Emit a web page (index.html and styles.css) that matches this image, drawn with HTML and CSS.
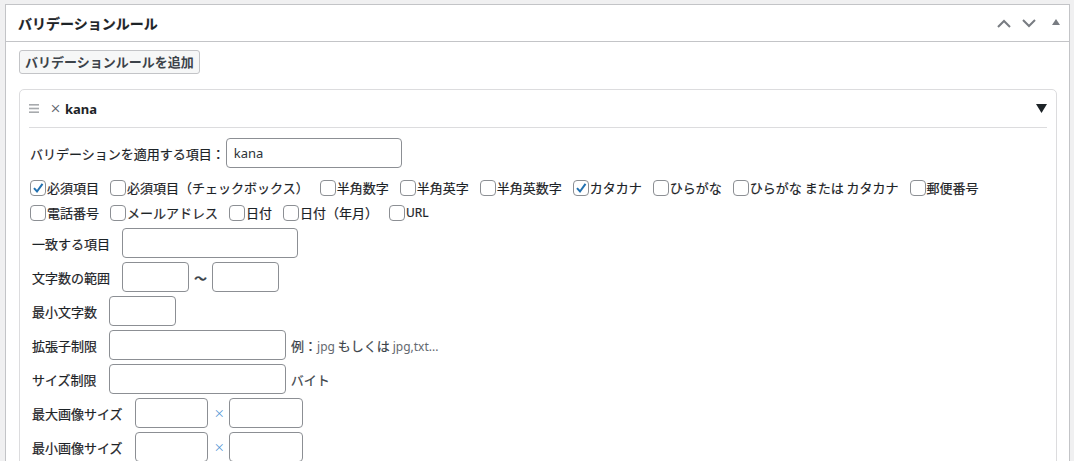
FILE: index.html
```html
<!DOCTYPE html>
<html lang="ja">
<head>
<meta charset="utf-8">
<title>バリデーションルール</title>
<link rel="stylesheet" href="styles.css">
</head>
<body>
<div class="postbox">
  <div class="postbox-header">
    <h2 class="postbox-title">バリデーションルール</h2>
    <div class="handle-actions">
      <button class="handle-btn" aria-label="上へ移動"><svg width="14" height="9" viewBox="0 0 14 9"><path d="M1 8 L7 2 L13 8" fill="none" stroke="#787c82" stroke-width="2"/></svg></button>
      <button class="handle-btn" aria-label="下へ移動"><svg width="14" height="9" viewBox="0 0 14 9"><path d="M1 1 L7 7 L13 1" fill="none" stroke="#787c82" stroke-width="2"/></svg></button>
      <button class="handle-btn toggle" aria-label="パネルを切り替え"><svg width="8" height="6" viewBox="0 0 8 6"><polygon points="0,6 4,0 8,6" fill="#787c82"/></svg></button>
    </div>
  </div>
  <div class="postbox-inside">
    <button class="button">バリデーションルールを追加</button>

    <div class="rule-card">
      <div class="rule-header">
        <span class="drag"><svg width="10" height="10" viewBox="0 0 10 10"><rect x="0" y="0" width="10" height="1.6" fill="#a7aaad"/><rect x="0" y="3.7" width="10" height="1.6" fill="#a7aaad"/><rect x="0" y="7.4" width="10" height="1.6" fill="#a7aaad"/></svg></span>
        <span class="remove">×</span>
        <span class="rule-name">kana</span>
        <span class="collapse"><svg width="11" height="9" viewBox="0 0 11 9"><polygon points="0,0 11,0 5.5,9" fill="#1d2327"/></svg></span>
      </div>
      <div class="rule-body">
        <div class="field-row first">
          <label class="lbl-first">バリデーションを適用する項目：</label>
          <input class="input w176" type="text" value="kana">
        </div>
        <div class="checks">
          <label class="chk"><span class="box checked"><svg width="14" height="14" viewBox="0 0 14 14"><path d="M3 7.2 L6 10.5 L11.5 2.8" fill="none" stroke="#2271b1" stroke-width="2"/></svg></span>必須項目</label>
          <label class="chk"><span class="box"></span>必須項目（チェックボックス）</label>
          <label class="chk"><span class="box"></span>半角数字</label>
          <label class="chk"><span class="box"></span>半角英字</label>
          <label class="chk"><span class="box"></span>半角英数字</label>
          <label class="chk"><span class="box checked"><svg width="14" height="14" viewBox="0 0 14 14"><path d="M3 7.2 L6 10.5 L11.5 2.8" fill="none" stroke="#2271b1" stroke-width="2"/></svg></span>カタカナ</label>
          <label class="chk"><span class="box"></span>ひらがな</label>
          <label class="chk"><span class="box"></span>ひらがな または カタカナ</label>
          <label class="chk"><span class="box"></span>郵便番号</label>
          <label class="chk"><span class="box"></span>電話番号</label>
          <label class="chk"><span class="box"></span>メールアドレス</label>
          <label class="chk"><span class="box"></span>日付</label>
          <label class="chk"><span class="box"></span>日付（年月）</label>
          <label class="chk"><span class="box"></span><span class="latin">URL</span></label>
        </div>
        <div class="field-row">
          <label class="lbl">一致する項目</label>
          <input class="input w176" type="text">
        </div>
        <div class="field-row">
          <label class="lbl">文字数の範囲</label>
          <input class="input w67" type="text">
          <span class="tilde">〜</span>
          <input class="input w67" type="text">
        </div>
        <div class="field-row">
          <label class="lbl">最小文字数</label>
          <input class="input w67" type="text">
        </div>
        <div class="field-row">
          <label class="lbl">拡張子制限</label>
          <input class="input w177" type="text">
          <span class="note">例：<span class="latin light">jpg</span> もしくは <span class="latin light">jpg,txt...</span></span>
        </div>
        <div class="field-row">
          <label class="lbl">サイズ制限</label>
          <input class="input w177" type="text">
          <span class="note dark">バイト</span>
        </div>
        <div class="field-row">
          <label class="lbl">最大画像サイズ</label>
          <input class="input w73" type="text">
          <span class="times">×</span>
          <input class="input w74" type="text">
        </div>
        <div class="field-row">
          <label class="lbl">最小画像サイズ</label>
          <input class="input w73" type="text">
          <span class="times">×</span>
          <input class="input w74" type="text">
        </div>
      </div>
    </div>
  </div>
</div>
</body>
</html>
```

FILE: styles.css
```css
html, body {
  margin: 0;
  padding: 0;
  overflow: hidden;
}
body {
  background: #f0f0f1;
  font-family: "Noto Sans CJK JP", "Noto Sans", sans-serif;
  font-size: 13px;
  color: #1d2327;
  padding: 4px 0 0 5px;
  -webkit-text-stroke: 0.2px currentColor;
}
.latin {
  font-family: "Noto Sans", "Noto Sans CJK JP", sans-serif;
  font-size: 12px;
}
.latin.light {
  color: #646970;
  -webkit-text-stroke: 0;
}
.postbox {
  background: #fff;
  border: 1px solid #c3c4c7;
  width: 1065px;
  box-sizing: border-box;
  height: 470px;
}
.postbox-header {
  display: flex;
  align-items: center;
  justify-content: space-between;
  height: 36px;
  border-bottom: 1px solid #c3c4c7;
}
.postbox-title {
  margin: 0;
  padding-left: 12px;
  font-size: 14px;
  font-weight: 700;
  line-height: 1;
  color: #1d2327;
}
.handle-actions {
  display: flex;
  align-items: center;
  padding-right: 9px;
}
.handle-btn {
  background: none;
  border: 0;
  padding: 0;
  display: flex;
  align-items: center;
  margin-left: 11px;
}
.handle-btn.toggle {
  margin-left: 16px;
  margin-top: -2px;
}
.postbox-inside {
  padding: 8px 13px 0 13px;
}
.button {
  display: block;
  font-family: inherit;
  font-size: 13px;
  font-weight: 700;
  color: #3c434a;
  background: #f6f7f7;
  border: 1px solid #c3c4c7;
  border-radius: 3px;
  height: 24px;
  padding: 0 5px;
  line-height: 20px;
  -webkit-text-stroke: 0;
}
.rule-card {
  margin-top: 15px;
  border: 1px solid #dcdcde;
  border-radius: 5px;
  width: 1038px;
  height: 400px;
  box-sizing: border-box;
}
.rule-header {
  display: flex;
  align-items: center;
  height: 37px;
  margin: 0 9px;
  border-bottom: 1px solid #dcdcde;
}
.drag {
  display: flex;
}
.remove {
  margin-left: 11px;
  font-size: 11px;
  color: #50575e;
  line-height: 1;
}
.rule-name {
  margin-left: 4px;
  font-family: "Noto Sans", sans-serif;
  font-weight: 700;
  font-size: 13px;
  color: #1d2327;
  -webkit-text-stroke: 0;
}
.collapse {
  margin-left: auto;
  display: flex;
}
.rule-body {
  padding: 8px 10px 0 10px;
}
.field-row {
  display: flex;
  align-items: center;
  height: 34px;
}
.lbl-first {
  margin-right: 1px;
}
.lbl {
  padding-left: 2px;
  margin-right: 12px;
  white-space: nowrap;
}
.input {
  height: 30px;
  box-sizing: border-box;
  border: 1px solid #8c8f94;
  border-radius: 4px;
  background: #fff;
  padding: 0 7px;
  font-family: "Noto Sans", sans-serif;
  font-size: 13px;
  color: #2c3338;
  -webkit-text-stroke: 0;
}
.w176 { width: 176px; }
.w177 { width: 177px; }
.w67 { width: 67px; }
.w73 { width: 73px; }
.w74 { width: 74px; }
.checks {
  display: flex;
  flex-wrap: wrap;
  padding-top: 5px;
  padding-bottom: 1px;
  width: 990px;
}
.chk {
  display: flex;
  align-items: center;
  height: 25px;
  margin-right: 11px;
  white-space: pre;
}
.box {
  width: 16px;
  height: 16px;
  box-sizing: border-box;
  border: 1px solid #8c8f94;
  border-radius: 4px;
  margin-right: 1px;
  display: flex;
  align-items: center;
  justify-content: center;
  background: #fff;
}
.tilde {
  margin: 0 5px;
  font-weight: 700;
  color: #3c434a;
}
.note {
  margin-left: 5px;
  color: #3c434a;
}
.times {
  margin: 0 4px 0 6px;
  font-size: 11px;
  color: #4f94d4;
  -webkit-text-stroke: 0;
}
```
